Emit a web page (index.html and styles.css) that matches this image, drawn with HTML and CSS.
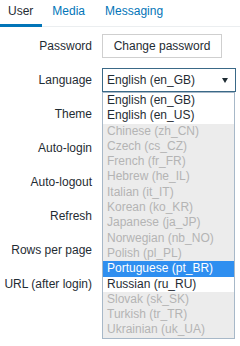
FILE: index.html
```html
<!DOCTYPE html>
<html lang="en">
  <head>
    <meta charset="UTF-8" />
    <meta name="viewport" content="width=device-width, initial-scale=1.0" />
    <title>User profile</title>
    <link rel="stylesheet" href="styles.css">
  </head>
  <body>
    <ul class="tabs">
      <li class="tab active">User</li>
      <li class="tab">Media</li>
      <li class="tab">Messaging</li>
    </ul>

    <form class="form">
      <label class="label">Password</label>
      <div class="field"><button type="button" class="btn">Change password</button></div>

      <label class="label">Language</label>
      <div class="field">
        <div class="select">
          <span>English (en_GB)</span>
          <span class="arrow"></span>
          <ul class="options">
            <li>English (en_GB)</li>
            <li>English (en_US)</li>
            <li class="off">Chinese (zh_CN)</li>
            <li class="off">Czech (cs_CZ)</li>
            <li class="off">French (fr_FR)</li>
            <li class="off">Hebrew (he_IL)</li>
            <li class="off">Italian (it_IT)</li>
            <li class="off">Korean (ko_KR)</li>
            <li class="off">Japanese (ja_JP)</li>
            <li class="off">Norwegian (nb_NO)</li>
            <li class="off">Polish (pl_PL)</li>
            <li class="hover">Portuguese (pt_BR)</li>
            <li>Russian (ru_RU)</li>
            <li class="off">Slovak (sk_SK)</li>
            <li class="off">Turkish (tr_TR)</li>
            <li class="off">Ukrainian (uk_UA)</li>
          </ul>
        </div>
      </div>

      <label class="label">Theme</label>
      <div class="field"></div>

      <label class="label">Auto-login</label>
      <div class="field"></div>

      <label class="label">Auto-logout</label>
      <div class="field"></div>

      <label class="label">Refresh</label>
      <div class="field"></div>

      <label class="label">Rows per page</label>
      <div class="field"></div>

      <label class="label">URL (after login)</label>
      <div class="field"></div>
    </form>
  </body>
</html>
```

FILE: styles.css
```css
body {
  margin: 0;
  min-height: 346px;
  font-family: "Liberation Sans", Arial, sans-serif;
  font-size: 12px;
  color: #1f2c33;
  background: #fff;
}

.tabs {
  display: flex;
  margin: 0;
  padding: 0;
  list-style: none;
  border-bottom: 1px solid #ebeef0;
}

.tab {
  padding: 0 10px 2px;
  line-height: 22px;
  color: #0275b8;
  border-bottom: 3px solid transparent;
  margin-bottom: -1px;
}

.tab.active {
  padding-left: 8px;
  padding-right: 9px;
  color: #1f2c33;
  border-bottom-color: #0275b8;
}

.form {
  display: grid;
  grid-template-columns: 92px 1fr;
  grid-auto-rows: 34px;
  column-gap: 10px;
  padding-top: 2px;
  padding-bottom: 46px;
}

.label {
  display: flex;
  align-items: center;
  justify-content: flex-end;
  white-space: nowrap;
}

.field {
  display: flex;
  align-items: center;
}

.btn {
  width: 120px;
  height: 24px;
  padding: 0;
  font: inherit;
  color: #1f2c33;
  background: #fff;
  border: 1px solid #cfcfcf;
}

.select {
  position: relative;
  box-sizing: border-box;
  width: 134px;
  height: 24px;
  padding-left: 4px;
  display: flex;
  align-items: center;
  border: 1px solid #3a6987;
}

.arrow {
  position: absolute;
  right: 7px;
  top: 9px;
  border-left: 3px solid transparent;
  border-right: 3px solid transparent;
  border-top: 5px solid #1f2c33;
}

.options {
  position: absolute;
  left: -1px;
  top: 23px;
  z-index: 2;
  box-sizing: border-box;
  width: 133px;
  margin: 0;
  padding: 0;
  list-style: none;
  background: #fff;
  border: 1px solid #a7b8c8;
}

.options li {
  padding-left: 4px;
  line-height: 15.3px;
  white-space: nowrap;
  color: #1f2c33;
}

.options .off {
  color: #b4b4b4;
  background: #ececec;
}

.options .hover {
  color: #fff;
  background: #2f8ff0;
}
```
